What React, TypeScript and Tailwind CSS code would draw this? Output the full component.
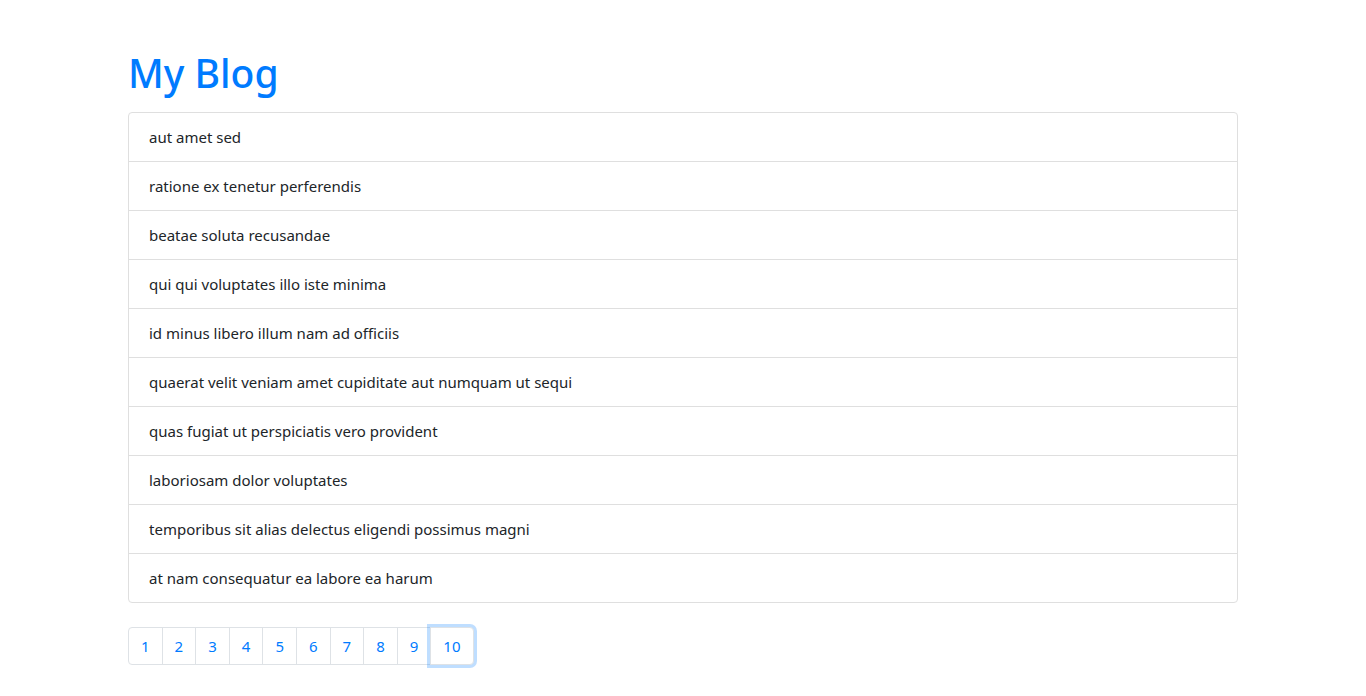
const posts = [
  "aut amet sed",
  "ratione ex tenetur perferendis",
  "beatae soluta recusandae",
  "qui qui voluptates illo iste minima",
  "id minus libero illum nam ad officiis",
  "quaerat velit veniam amet cupiditate aut numquam ut sequi",
  "quas fugiat ut perspiciatis vero provident",
  "laboriosam dolor voluptates",
  "temporibus sit alias delectus eligendi possimus magni",
  "at nam consequatur ea labore ea harum",
];

const pages = [1, 2, 3, 4, 5, 6, 7, 8, 9, 10];

function App() {
  const current = 10;

  return (
    <div
      className="min-h-screen bg-white text-[#212529]"
      style={{ fontFamily: '"Noto Sans", "Open Sans", sans-serif' }}
    >
      <div className="mx-auto w-[1140px] px-[15px] pt-[49px]">
        <h1 className="mb-[15px] text-[39px] leading-[48px] font-medium text-[#007bff]">
          My Blog
        </h1>

        <ul className="flex flex-col rounded border border-[#dfdfdf]">
          {posts.map((title, i) => (
            <li
              key={title}
              className={
                "px-5 py-3 text-[15px] leading-6 " +
                (i > 0 ? "border-t border-[#dfdfdf]" : "")
              }
            >
              {title}
            </li>
          ))}
        </ul>

        <nav className="mt-6 flex">
          {pages.map((p, i) => (
            <button
              key={p}
              className={
                "relative -ml-px border border-[#dee2e6] bg-white px-3 py-2 text-[15px] leading-5 text-[#007bff] first:ml-0 " +
                (i === 0 ? "rounded-l " : "") +
                (i === pages.length - 1 ? "rounded-r " : "") +
                (p === current
                  ? "z-10 shadow-[0_0_0_3px_rgba(0,123,255,0.25)]"
                  : "")
              }
            >
              {p}
            </button>
          ))}
        </nav>
      </div>
    </div>
  );
}

export default App;
